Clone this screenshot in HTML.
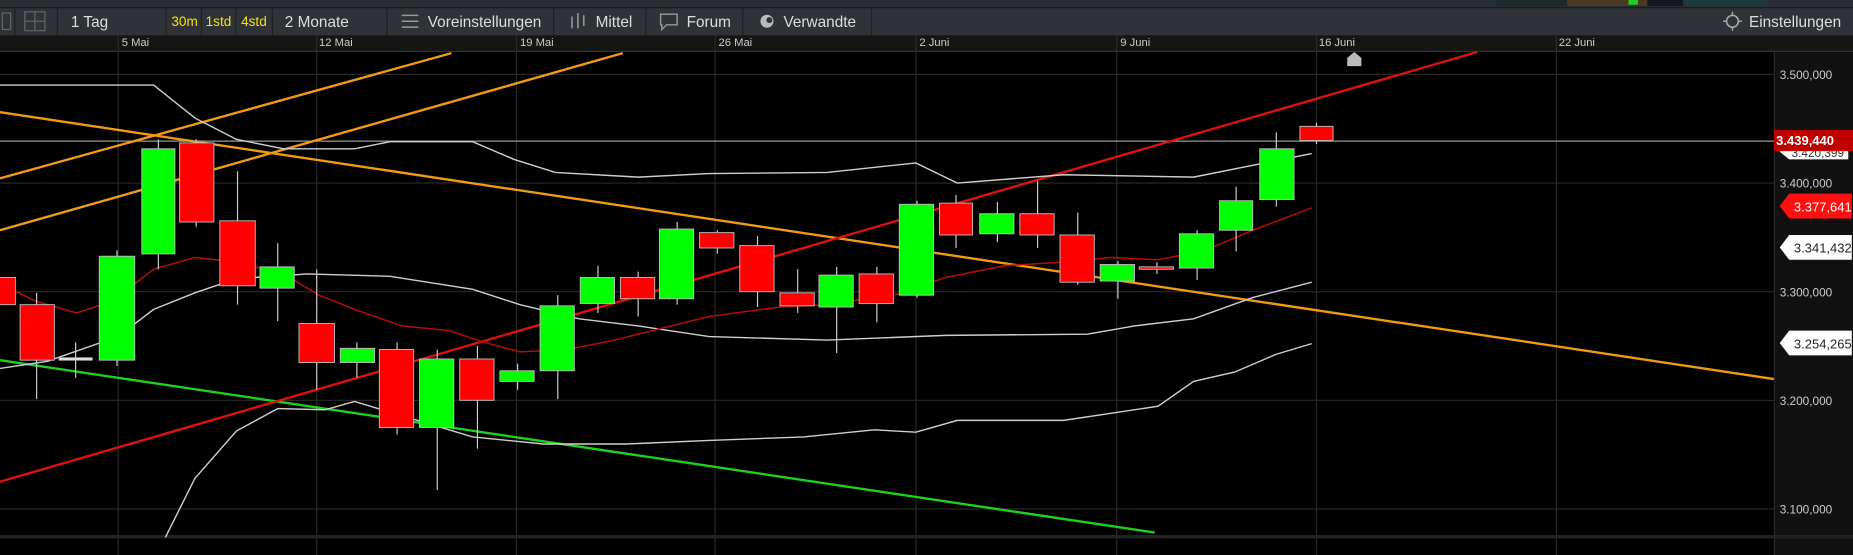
<!DOCTYPE html>
<html><head><meta charset="utf-8"><style>
html,body{margin:0;padding:0;background:#000;overflow:hidden}
svg{display:block}
text{font-family:"Liberation Sans",sans-serif}
</style></head><body>
<svg width="1853" height="555" viewBox="0 0 1568 470" preserveAspectRatio="none" xmlns="http://www.w3.org/2000/svg">
<rect x="0" y="0" width="1568" height="6" fill="#2a2d31"/>
<rect x="1266" y="0" width="60" height="5" fill="#1c2a2a"/>
<rect x="1326" y="0" width="68" height="5" fill="#4a3a22"/>
<rect x="1378" y="0" width="8" height="4" fill="#22cc22"/>
<rect x="1394" y="0" width="30" height="5" fill="#15181c"/>
<rect x="1426" y="0" width="70" height="5" fill="#1c3a3e"/>
<rect x="0" y="6" width="1568" height="24" fill="#2f3236"/>
<rect x="0" y="6" width="1568" height="1" fill="#1a1c1f"/>
<g fill="#1e2023">
<rect x="12" y="6" width="1" height="24"/><rect x="48" y="6" width="1" height="24"/>
<rect x="140" y="6" width="1" height="24"/><rect x="170" y="6" width="1" height="24"/><rect x="199" y="6" width="1" height="24"/><rect x="230" y="6" width="1" height="24"/>
<rect x="327" y="6" width="1" height="24"/><rect x="468" y="6" width="1" height="24"/><rect x="546" y="6" width="1" height="24"/><rect x="628" y="6" width="1" height="24"/><rect x="737" y="6" width="1" height="24"/>
</g>
<rect x="21" y="10" width="17" height="16" fill="none" stroke="#666" stroke-width="1"/>
<line x1="29.5" y1="10" x2="29.5" y2="26" stroke="#666"/><line x1="21" y1="18" x2="38" y2="18" stroke="#666"/>
<rect x="2" y="11" width="7" height="14" fill="none" stroke="#666"/>
<text x="60" y="23" fill="#ddd" font-size="13">1 Tag</text>
<text x="145" y="22" fill="#f3e21a" font-size="11.5">30m</text>
<text x="174" y="22" fill="#f3e21a" font-size="11.5">1std</text>
<text x="204" y="22" fill="#f3e21a" font-size="11.5">4std</text>
<text x="241" y="23" fill="#ddd" font-size="13">2 Monate</text>
<g stroke="#999" stroke-width="1.3"><line x1="340" y1="13" x2="354" y2="13"/><line x1="340" y1="18" x2="354" y2="18"/><line x1="340" y1="23" x2="354" y2="23"/></g>
<text x="362" y="23" fill="#ddd" font-size="13">Voreinstellungen</text>
<g stroke="#999" stroke-width="1.3"><line x1="484" y1="14" x2="484" y2="24"/><line x1="489" y1="11" x2="489" y2="24"/><line x1="494" y1="13" x2="494" y2="22"/></g>
<text x="504" y="23" fill="#ddd" font-size="13">Mittel</text>
<path d="M559 12h14v9h-9l-4 4v-4h-1z" fill="none" stroke="#999" stroke-width="1.2"/>
<text x="581" y="23" fill="#ddd" font-size="13">Forum</text>
<circle cx="649" cy="18" r="5.5" fill="#bbb"/><circle cx="651" cy="17" r="2.5" fill="#2f3236"/>
<text x="663" y="23" fill="#ddd" font-size="13">Verwandte</text>
<circle cx="1466" cy="18" r="5" fill="none" stroke="#aaa" stroke-width="1.3"/>
<g stroke="#aaa" stroke-width="1.2"><line x1="1458" y1="18" x2="1461" y2="18"/><line x1="1471" y1="18" x2="1474" y2="18"/><line x1="1466" y1="10" x2="1466" y2="13"/><line x1="1466" y1="23" x2="1466" y2="26"/></g>
<text x="1480" y="23" fill="#ddd" font-size="13">Einstellungen</text>
<rect x="0" y="30" width="1568" height="14" fill="#151515"/>
<rect x="0" y="43" width="1568" height="1" fill="#333"/>
<g fill="#ccc" font-size="9.5">
<text x="103" y="39">5 Mai</text><text x="270" y="39">12 Mai</text><text x="440" y="39">19 Mai</text><text x="608" y="39">26 Mai</text><text x="778" y="39">2 Juni</text><text x="948" y="39">9 Juni</text><text x="1116" y="39">16 Juni</text><text x="1319" y="39">22 Juni</text>
</g>
<rect x="1501" y="44" width="67" height="426" fill="#111"/>
<rect x="1501" y="44" width="1" height="426" fill="#2a2a2a"/>
<g stroke="#2a2a2a" stroke-width="1">
<line x1="100" y1="30" x2="100" y2="470"/><line x1="268" y1="30" x2="268" y2="470"/><line x1="437" y1="30" x2="437" y2="470"/><line x1="605" y1="30" x2="605" y2="470"/><line x1="775" y1="30" x2="775" y2="470"/><line x1="945" y1="30" x2="945" y2="470"/><line x1="1114" y1="30" x2="1114" y2="470"/><line x1="1317" y1="30" x2="1317" y2="470"/>
<line x1="0" y1="63" x2="1501" y2="63"/><line x1="0" y1="155" x2="1501" y2="155"/><line x1="0" y1="247" x2="1501" y2="247"/><line x1="0" y1="339" x2="1501" y2="339"/><line x1="0" y1="431" x2="1501" y2="431"/>
</g>
<rect x="0" y="453" width="1568" height="3" fill="#222"/>
<g fill="#ccc" font-size="10">
<text x="1506" y="67">3.500,000</text><text x="1506" y="159">3.400,000</text><text x="1506" y="251">3.300,000</text><text x="1506" y="343">3.200,000</text><text x="1506" y="435">3.100,000</text>
</g>
<line x1="0" y1="119.5" x2="1501" y2="119.5" stroke="#999" stroke-width="1"/>
<path d="M1140 56v-7l6-5 6 5v7z" fill="#bbb"/>
<g fill="none" stroke-width="2">
<line x1="0" y1="151" x2="382" y2="45" stroke="#f29b12"/>
<line x1="0" y1="195" x2="527" y2="45" stroke="#f29b12"/>
<line x1="0" y1="95" x2="1501" y2="321" stroke="#f29b12"/>
<line x1="0" y1="305" x2="977" y2="451" stroke="#1fd11f"/>
<line x1="0" y1="408" x2="1250" y2="44" stroke="#e01010"/>
</g>
<g fill="none" stroke="#cfcfcf" stroke-width="1.2">
<polyline points="0,72 130,72 165,100 200,118 240,126 300,126 330,120 400,120 435,135 470,146 540,150 600,147 700,146 775,138 810,155 900,148 1010,150 1060,140 1110,130"/>
<polyline points="0,312 40,306 100,285 130,262 165,248 200,236 260,232 330,234 400,245 440,258 490,270 540,276 600,285 700,288 800,284 920,283 960,276 1010,270 1060,252 1110,239"/>
<polyline points="140,455 165,405 200,365 235,346 275,347 300,340 340,352 400,370 460,376 530,376 600,373 680,370 740,364 775,366 810,356 900,356 940,350 980,344 1010,323 1045,315 1080,300 1110,291"/>
</g>
<polyline fill="none" stroke="#b00d0d" stroke-width="1.3" points="0,240 30,255 65,265 95,255 130,228 165,218 200,222 240,232 270,250 300,262 340,276 380,280 410,290 440,298 480,296 520,288 560,278 600,268 660,260 700,258 760,249 800,235 850,225 900,222 940,218 980,220 1020,212 1060,195 1110,176"/>
<g stroke="#ccc" stroke-width="1">
<line x1="31" y1="248" x2="31" y2="338"/><line x1="64" y1="290" x2="64" y2="320"/><line x1="99" y1="212" x2="99" y2="310"/><line x1="134" y1="118" x2="134" y2="228"/><line x1="166" y1="118" x2="166" y2="192"/><line x1="201" y1="145" x2="201" y2="258"/><line x1="235" y1="206" x2="235" y2="272"/><line x1="268" y1="228" x2="268" y2="330"/><line x1="302" y1="290" x2="302" y2="320"/><line x1="336" y1="290" x2="336" y2="368"/><line x1="370" y1="296" x2="370" y2="415"/><line x1="404" y1="293" x2="404" y2="380"/><line x1="438" y1="308" x2="438" y2="330"/><line x1="472" y1="250" x2="472" y2="338"/><line x1="506" y1="225" x2="506" y2="265"/><line x1="540" y1="230" x2="540" y2="268"/><line x1="573" y1="188" x2="573" y2="258"/><line x1="607" y1="195" x2="607" y2="215"/><line x1="641" y1="200" x2="641" y2="260"/><line x1="675" y1="228" x2="675" y2="265"/><line x1="708" y1="226" x2="708" y2="299"/><line x1="742" y1="226" x2="742" y2="273"/><line x1="776" y1="170" x2="776" y2="252"/><line x1="809" y1="165" x2="809" y2="210"/><line x1="844" y1="171" x2="844" y2="205"/><line x1="878" y1="153" x2="878" y2="210"/><line x1="912" y1="180" x2="912" y2="241"/><line x1="946" y1="221" x2="946" y2="253"/><line x1="979" y1="222" x2="979" y2="232"/><line x1="1013" y1="195" x2="1013" y2="237"/><line x1="1046" y1="158" x2="1046" y2="213"/><line x1="1080" y1="112" x2="1080" y2="175"/><line x1="1114" y1="104" x2="1114" y2="122"/>
</g>
<g stroke="#bbb" stroke-width="0.8">
<rect x="-2" y="235" width="15" height="23" fill="#ff0000"/>
<rect x="17" y="258" width="29" height="47" fill="#ff0000"/>
<rect x="50" y="303" width="28" height="2" fill="#eee"/>
<rect x="84" y="217" width="30" height="88" fill="#00ff00"/>
<rect x="120" y="126" width="28" height="89" fill="#00ff00"/>
<rect x="152" y="121" width="29" height="67" fill="#ff0000"/>
<rect x="186" y="187" width="30" height="55" fill="#ff0000"/>
<rect x="220" y="226" width="29" height="18" fill="#00ff00"/>
<rect x="253" y="274" width="30" height="33" fill="#ff0000"/>
<rect x="288" y="295" width="29" height="12" fill="#00ff00"/>
<rect x="321" y="296" width="29" height="66" fill="#ff0000"/>
<rect x="355" y="304" width="29" height="58" fill="#00ff00"/>
<rect x="389" y="304" width="29" height="35" fill="#ff0000"/>
<rect x="423" y="314" width="29" height="9" fill="#00ff00"/>
<rect x="457" y="259" width="29" height="55" fill="#00ff00"/>
<rect x="491" y="235" width="29" height="22" fill="#00ff00"/>
<rect x="525" y="235" width="29" height="18" fill="#ff0000"/>
<rect x="558" y="194" width="29" height="59" fill="#00ff00"/>
<rect x="592" y="197" width="29" height="13" fill="#ff0000"/>
<rect x="626" y="208" width="29" height="39" fill="#ff0000"/>
<rect x="660" y="248" width="29" height="11" fill="#ff0000"/>
<rect x="693" y="233" width="29" height="27" fill="#00ff00"/>
<rect x="727" y="232" width="29" height="25" fill="#ff0000"/>
<rect x="761" y="173" width="29" height="77" fill="#00ff00"/>
<rect x="795" y="172" width="28" height="27" fill="#ff0000"/>
<rect x="829" y="181" width="29" height="17" fill="#00ff00"/>
<rect x="863" y="181" width="29" height="18" fill="#ff0000"/>
<rect x="897" y="199" width="29" height="40" fill="#ff0000"/>
<rect x="931" y="224" width="29" height="14" fill="#00ff00"/>
<rect x="964" y="226" width="29" height="2" fill="#ff0000"/>
<rect x="998" y="198" width="29" height="29" fill="#00ff00"/>
<rect x="1032" y="170" width="28" height="25" fill="#00ff00"/>
<rect x="1066" y="126" width="29" height="43" fill="#00ff00"/>
<rect x="1100" y="107" width="28" height="12" fill="#ff0000"/>
</g>
<path d="M1514 122h50v13h-50l-8-6.5z" fill="#fff"/>
<text x="1516" y="133" fill="#333" font-size="10">3.420,399</text>
<rect x="1501" y="110" width="67" height="18" fill="#c00000"/>
<text x="1503" y="123" fill="#fff" font-size="11" font-weight="bold">3.439,440</text>
<path d="M1514 164h53v21h-53l-8-10.5z" fill="#ff1010"/>
<text x="1518" y="179" fill="#fff" font-size="11">3.377,641</text>
<path d="M1514 199h53v21h-53l-8-10.5z" fill="#fff"/>
<text x="1518" y="214" fill="#222" font-size="11">3.341,432</text>
<path d="M1514 280h53v21h-53l-8-10.5z" fill="#fff"/>
<text x="1518" y="295" fill="#222" font-size="11">3.254,265</text>
</svg>
</body></html>
